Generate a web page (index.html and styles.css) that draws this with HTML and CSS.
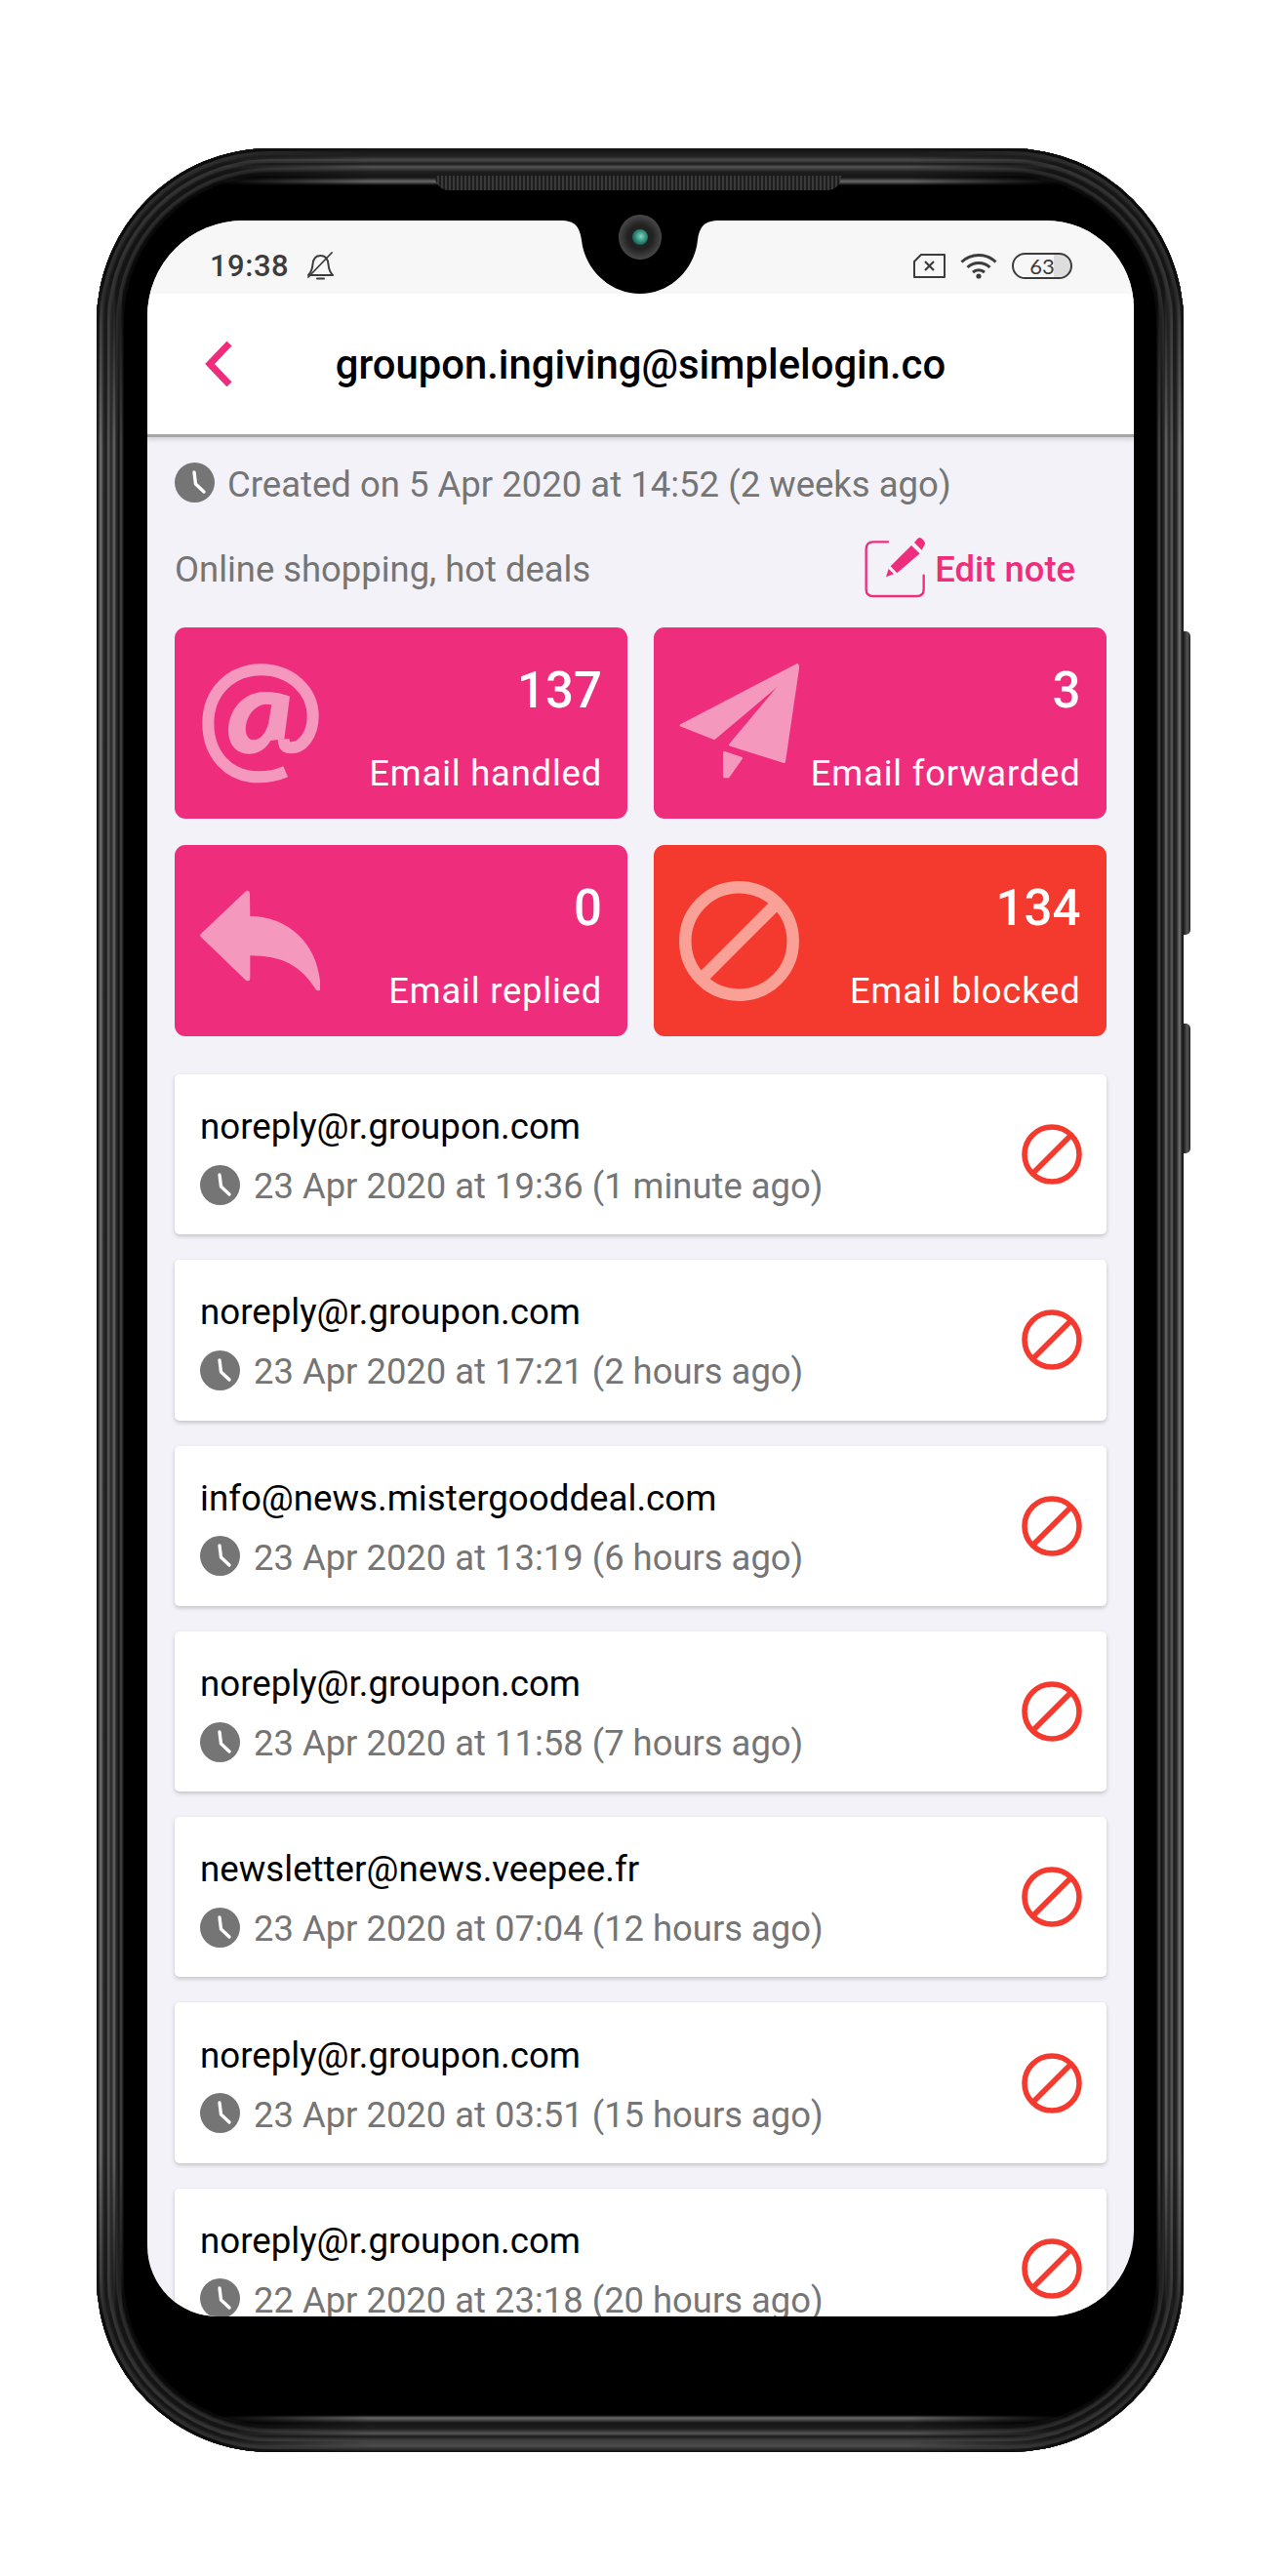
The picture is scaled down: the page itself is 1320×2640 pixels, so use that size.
FILE: index.html
```html
<!DOCTYPE html>
<html lang="en">
<head>
    <meta charset="UTF-8">
    <meta name="viewport" content="width=device-width, initial-scale=1.0">
    <title>Alias activity</title>
    <link rel="stylesheet" href="styles.css">
</head>
<body>
    <svg class="defs" width="0" height="0">
        <symbol id="clock" viewBox="0 0 41 41">
            <circle cx="20.5" cy="20.5" r="20.5" fill="#757575"/>
            <path d="M20 10 L21.500 22 L30 30" fill="none" stroke="#fff" stroke-width="3.4" stroke-linecap="round" stroke-linejoin="round"/>
        </symbol>
        <symbol id="ban" viewBox="0 0 62 62">
            <circle cx="31" cy="31" r="28" fill="none" stroke="#f43a2e" stroke-width="5.6"/>
            <path d="M11 51 L51 11" stroke="#f43a2e" stroke-width="5.6"/>
        </symbol>
    </svg>

    <div class="phone">
        <div class="side-btn side-btn-power"></div>
        <div class="side-btn side-btn-volume"></div>
        <div class="speaker"></div>

        <div class="screen">
            <!-- Status bar -->
            <div class="status-bar">
                <span class="status-time">19:38</span>
                <svg class="bell" viewBox="0 0 29 29" fill="none" stroke="#3c3c3c" stroke-width="2" stroke-linejoin="round" stroke-linecap="round">
                    <path d="M2 24 C5 21 6 18 6.5 13 C7 7 10 4 14.5 4 C19 4 22 7 22.5 13 C23 18 24 21 27 24 Z"/>
                    <path d="M11 27.5 L18 27.5"/>
                    <path d="M2 26 L26 1" stroke-width="1.8"/>
                </svg>
                <span class="status-right">
                    <svg class="sim" viewBox="0 0 33 25" fill="none" stroke="#3c3c3c" stroke-width="2" stroke-linejoin="round">
                        <path d="M8 1 L32 1 L32 24 L1 24 L1 8 Z"/>
                        <path d="M12 8 L21 17 M21 8 L12 17" stroke-width="2.2"/>
                    </svg>
                    <svg class="wifi" viewBox="0 0 38 27" fill="none" stroke="#3c3c3c" stroke-width="3">
                        <path d="M1.5 9.5 C11 0 27 0 36.5 9.5"/>
                        <path d="M7.5 15 C14 9 24 9 30.5 15"/>
                        <path d="M13 20 C16.5 17 21.500 17 25 20"/>
                        <circle cx="19" cy="24" r="2.6" fill="#3c3c3c" stroke="none"/>
                    </svg>
                    <span class="battery"><span class="battery-level">63</span></span>
                </span>
            </div>

            <!-- Header -->
            <div class="header">
                <svg class="back" viewBox="0 0 28 46" fill="none" stroke="#ee2e7c" stroke-width="7">
                    <path d="M25 2 L5 23 L25 44"/>
                </svg>
                <h1 class="title">groupon.ingiving@simplelogin.co</h1>
            </div>

            <div class="content">
                <div class="created">
                    <svg class="clock"><use href="#clock"/></svg>
                    <span class="created-text">Created on 5 Apr 2020 at 14:52 (2 weeks ago)</span>
                </div>

                <div class="note-row">
                    <span class="note">Online shopping, hot deals</span>
                    <span class="edit-note">
                        <svg class="edit-icon" viewBox="75 55 195 195">
                            <path d="M150 74 L105 74 Q83 74 83 96 L83 220 Q83 241 105 241 L238 241 Q260 241 260 220 L260 177" fill="none" stroke="#ee2e7c" stroke-width="7" stroke-linecap="round"/>
                            <path d="M144 182 L152 157 L168 173 Z" fill="#ee2e7c"/>
                            <path d="M158 149 L222 85 L248 110 L178 170 Z" fill="#ee2e7c"/>
                            <path d="M231 76 L242 63 Q248 59 254 64 L262 72 Q266 78 262 84 L254 99 Z" fill="#ee2e7c"/>
                        </svg>
                        Edit note
                    </span>
                </div>

                <div class="stats">
                    <div class="stat">
                        <svg class="stat-icon" viewBox="135 178 369 369">
                            <path d="M398 510 C370 522 345 527 315 527 C225 527 160 460 160 362 C160 265 230 197 322 197 C415 197 482 262 482 340 C482 395 452 437 415 437 C398 437 392 428 392 410" fill="none" stroke="#f598bd" stroke-width="36"/>
                            <path fill="#f598bd" fill-rule="evenodd" d="M411 279 L394 410 L352 415 C338 440 315 456 285 456 C250 456 222 430 222 385 C222 320 270 265 335 265 C365 265 385 270 411 279 Z M355 305 L345 365 C335 395 320 413 300 413 C285 413 275 400 275 380 C275 340 305 303 340 303 Z"/>
                        </svg>
                        <div class="stat-text">
                            <div class="stat-num">137</div>
                            <div class="stat-label">Email handled</div>
                        </div>
                    </div>
                    <div class="stat">
                        <svg class="stat-icon" viewBox="135 178 369 369">
                            <g fill="#f598bd" stroke="#f598bd" stroke-width="8" stroke-linejoin="round">
                                <path d="M141 368 L498 182 L440 242 L243 408 Z"/>
                                <path d="M501 186 L458 480 L292 428 L445 245 Z"/>
                                <path d="M274 452 L326 469 L286 526 L274 526 Z"/>
                            </g>
                        </svg>
                        <div class="stat-text">
                            <div class="stat-num">3</div>
                            <div class="stat-label">Email forwarded</div>
                        </div>
                    </div>
                    <div class="stat">
                        <svg class="stat-icon" viewBox="135 847 369 369">
                            <path d="M144 1014 L280 885 L281 962 C400 962 490 1040 498 1176 C450 1100 390 1066 281 1068 L281 1146 Z" fill="#f598bd" stroke="#f598bd" stroke-width="16" stroke-linejoin="round"/>
                        </svg>
                        <div class="stat-text">
                            <div class="stat-num">0</div>
                            <div class="stat-label">Email replied</div>
                        </div>
                    </div>
                    <div class="stat stat-red">
                        <svg class="stat-icon" viewBox="0 0 123 123" fill="none" stroke="#f9a097" stroke-width="12.500">
                            <circle cx="61.500" cy="61.500" r="55.200"/>
                            <path d="M23 100 L100 23"/>
                        </svg>
                        <div class="stat-text">
                            <div class="stat-num">134</div>
                            <div class="stat-label">Email blocked</div>
                        </div>
                    </div>
                </div>

                <div class="activity">
                    <div class="item">
                        <div class="item-text">
                            <div class="item-from">noreply@r.groupon.com</div>
                            <div class="item-time"><svg class="clock-small"><use href="#clock"/></svg>23 Apr 2020 at 19:36 (1 minute ago)</div>
                        </div>
                        <svg class="ban"><use href="#ban"/></svg>
                    </div>
                    <div class="item">
                        <div class="item-text">
                            <div class="item-from">noreply@r.groupon.com</div>
                            <div class="item-time"><svg class="clock-small"><use href="#clock"/></svg>23 Apr 2020 at 17:21 (2 hours ago)</div>
                        </div>
                        <svg class="ban"><use href="#ban"/></svg>
                    </div>
                    <div class="item">
                        <div class="item-text">
                            <div class="item-from">info@news.mistergooddeal.com</div>
                            <div class="item-time"><svg class="clock-small"><use href="#clock"/></svg>23 Apr 2020 at 13:19 (6 hours ago)</div>
                        </div>
                        <svg class="ban"><use href="#ban"/></svg>
                    </div>
                    <div class="item">
                        <div class="item-text">
                            <div class="item-from">noreply@r.groupon.com</div>
                            <div class="item-time"><svg class="clock-small"><use href="#clock"/></svg>23 Apr 2020 at 11:58 (7 hours ago)</div>
                        </div>
                        <svg class="ban"><use href="#ban"/></svg>
                    </div>
                    <div class="item">
                        <div class="item-text">
                            <div class="item-from">newsletter@news.veepee.fr</div>
                            <div class="item-time"><svg class="clock-small"><use href="#clock"/></svg>23 Apr 2020 at 07:04 (12 hours ago)</div>
                        </div>
                        <svg class="ban"><use href="#ban"/></svg>
                    </div>
                    <div class="item">
                        <div class="item-text">
                            <div class="item-from">noreply@r.groupon.com</div>
                            <div class="item-time"><svg class="clock-small"><use href="#clock"/></svg>23 Apr 2020 at 03:51 (15 hours ago)</div>
                        </div>
                        <svg class="ban"><use href="#ban"/></svg>
                    </div>
                    <div class="item">
                        <div class="item-text">
                            <div class="item-from">noreply@r.groupon.com</div>
                            <div class="item-time"><svg class="clock-small"><use href="#clock"/></svg>22 Apr 2020 at 23:18 (20 hours ago)</div>
                        </div>
                        <svg class="ban"><use href="#ban"/></svg>
                    </div>
                </div>
            </div>
        </div>

        <!-- Notch sits over the top of the screen -->
        <svg class="notch" viewBox="0 0 162 76">
            <path d="M0 0 C14 0 19 6 21 20 C24 50 50 75 81 75 C112 75 137 50 140 20 C142 6 147 0 162 0 Z" fill="#000"/>
        </svg>
        <div class="camera"><div class="lens"></div></div>
    </div>
</body>
</html>
```

FILE: styles.css
```css
body {
    margin: 0;
    background: #fff;
    font-family: Roboto, sans-serif;
}
.defs {
    position: absolute;
}

/* Phone body */
.phone {
    position: relative;
    box-sizing: border-box;
    width: 1114px;
    height: 2361px;
    margin: 152px 0 0 99px;
    padding: 74px 51px 0 52px;
    background: #000;
    border-radius: 178px;
    box-shadow:
        inset 0 0 0 3px #0c0c0c,
        inset 0 0 2px 7px #2e2e2e,
        inset 0 0 0 11px #161616,
        inset 0 0 2px 15px #333,
        inset 0 0 0 20px #141414,
        inset 0 0 2px 24px #2c2c2c,
        inset 0 0 0 28px #0a0a0a;
}
/* bright edge lines only show on the straight sides of the frame, fading out into the corners */
.phone::before {
    content: "";
    position: absolute;
    inset: 0;
    pointer-events: none;
    border-radius: inherit;
    background:
        linear-gradient(90deg, #111 0, #2a2a2a 2px, #777 4px, #2a2a2a 7px, #1a1a1a 10px, #5e5e5e 12px, #222 15px, #6a6a6a 18px, #2a2a2a 20px, #111 23px, #4a4a4a 25px, #000 28px) left top / 28px 100% no-repeat,
        linear-gradient(270deg, #111 0, #2a2a2a 2px, #777 4px, #2a2a2a 7px, #1a1a1a 10px, #5e5e5e 12px, #222 15px, #6a6a6a 18px, #2a2a2a 20px, #111 23px, #4a4a4a 25px, #000 28px) right top / 28px 100% no-repeat;
    mask-image: linear-gradient(180deg, transparent 130px, #000 300px, #000 2060px, transparent 2230px);
}
.phone::after {
    content: "";
    position: absolute;
    inset: 0;
    pointer-events: none;
    border-radius: inherit;
    background:
        linear-gradient(180deg, #111 0, #222 8px, #4a4a4a 12px, #1c1c1c 16px, #555 19px, #1e1e1e 24px, #161616 30px, #6a6a6a 34px, #000 38px) left top / 100% 38px no-repeat,
        linear-gradient(0deg, #111 0, #4a4a4a 6px, #404040 12px, #1c1c1c 16px, #555 19px, #1e1e1e 24px, #161616 30px, #6a6a6a 35px, #000 38px) left bottom / 100% 38px no-repeat;
    mask-image: linear-gradient(90deg, transparent 120px, #000 280px, #000 834px, transparent 994px);
}
.side-btn {
    position: absolute;
    left: 1113px;
    width: 8px;
    background: linear-gradient(90deg, #111, #555 60%, #222);
    border-radius: 0 5px 5px 0;
}
.side-btn-power {
    top: 495px;
    height: 311px;
}
.side-btn-volume {
    top: 897px;
    height: 133px;
}
.speaker {
    position: absolute;
    z-index: 1;
    left: 347px;
    top: 28px;
    width: 416px;
    height: 15px;
    border-radius: 0 0 14px 14px;
    background: repeating-linear-gradient(90deg, #1d1d1d 0 2px, #3a3a3a 2px 4px);
}
.notch {
    position: absolute;
    left: 476px;
    top: 74px;
    width: 162px;
    height: 76px;
}
.camera {
    position: absolute;
    left: 535px;
    top: 68px;
    width: 44px;
    height: 46px;
    display: flex;
    align-items: center;
    justify-content: center;
    border-radius: 50%;
    background: radial-gradient(circle, #222 40%, #4a4a4a 72%, #111 100%);
}
.lens {
    width: 16px;
    height: 16px;
    border-radius: 50%;
    background: radial-gradient(circle at 55% 45%, #8fd0c0 0, #2f8f7c 45%, #0c2a28 100%);
}

/* Screen */
.screen {
    width: 1011px;
    height: 2148px;
    overflow: hidden;
    background: #f2f2f8;
    border-radius: 98px 90px 88px 72px;
}
.status-bar {
    display: flex;
    align-items: center;
    box-sizing: border-box;
    height: 75px;
    padding: 18px 63px 0 64px;
    background: #f7f7f7;
    color: #3c3c3c;
}
.status-time {
    font-size: 31px;
    font-weight: 500;
    letter-spacing: 0.5px;
}
.bell {
    width: 29px;
    height: 29px;
    margin-left: 18px;
}
.status-right {
    display: flex;
    align-items: center;
    margin-left: auto;
}
.sim {
    width: 33px;
    height: 25px;
}
.wifi {
    width: 38px;
    height: 27px;
    margin-left: 15px;
}
.battery {
    box-sizing: border-box;
    display: flex;
    align-items: center;
    justify-content: center;
    width: 62px;
    height: 27px;
    margin-left: 15px;
    border: 2px solid #3c3c3c;
    border-radius: 14px;
    background: linear-gradient(90deg, transparent 70%, #ddd 70%);
}
.battery-level {
    font-family: Lato, sans-serif;
    font-size: 22px;
    line-height: 1;
}

.header {
    position: relative;
    display: flex;
    align-items: center;
    justify-content: center;
    height: 144px;
    background: #fff;
    border-bottom: 3px solid #a5a5a5;
    box-shadow: 0 3px 4px rgba(0, 0, 0, 0.12);
}
.back {
    position: absolute;
    left: 59px;
    top: 49px;
    width: 28px;
    height: 46px;
}
.title {
    margin: 0;
    font-size: 41.8px;
    font-weight: 500;
    color: #000;
}

/* Content */
.content {
    padding: 0 28px;
}
.created {
    display: flex;
    align-items: center;
    height: 92px;
    font-size: 36.5px;
    color: #757575;
}
.created-text {
    padding-top: 5px;
}
.clock {
    width: 41px;
    height: 41px;
    margin-right: 13px;
}
.note-row {
    display: flex;
    align-items: center;
    justify-content: space-between;
    height: 102px;
    margin-top: -8px;
    padding-right: 32px;
    font-size: 36.4px;
    color: #757575;
}
.edit-note {
    display: flex;
    align-items: center;
    font-weight: 500;
    color: #ee2e7c;
}
.edit-icon {
    width: 65px;
    height: 65px;
    margin-right: 8px;
    margin-top: -4px;
}

.stats {
    display: grid;
    grid-template-columns: 464px 464px;
    grid-auto-rows: 196px;
    gap: 27px 26.5px;
    margin-top: 9px;
}
.stat {
    display: flex;
    align-items: center;
    justify-content: space-between;
    padding: 0 26px;
    background: #ee2e7c;
    border-radius: 11px;
    color: #fff;
}
.stat-red {
    background: #f43a2e;
}
.stat-icon {
    width: 123px;
    height: 123px;
}
.stat-text {
    padding-top: 10px;
    text-align: right;
}
.stat-num {
    font-size: 51px;
    font-weight: 500;
    line-height: 58px;
}
.stat-label {
    margin-top: 35px;
    font-size: 36.4px;
    line-height: 42px;
    letter-spacing: 0.8px;
}

.activity {
    display: flex;
    flex-direction: column;
    gap: 26px;
    margin-top: 39px;
}
.item {
    display: flex;
    align-items: center;
    justify-content: space-between;
    box-sizing: border-box;
    height: 164.3px;
    flex-shrink: 0;
    padding: 0 25px 0 26px;
    background: #fff;
    border-radius: 5px;
    box-shadow: 0 2px 4px rgba(0, 0, 0, 0.2);
}
.item-text {
    padding-top: 5px;
}
.item-from {
    font-size: 36.7px;
    line-height: 40px;
    color: #000;
}
.item-time {
    display: flex;
    align-items: center;
    margin-top: 20px;
    font-size: 36.4px;
    line-height: 41px;
    color: #757575;
}
.clock-small {
    width: 41px;
    height: 41px;
    margin-top: -3px;
    margin-right: 14px;
}
.ban {
    width: 62px;
    height: 62px;
}
```
